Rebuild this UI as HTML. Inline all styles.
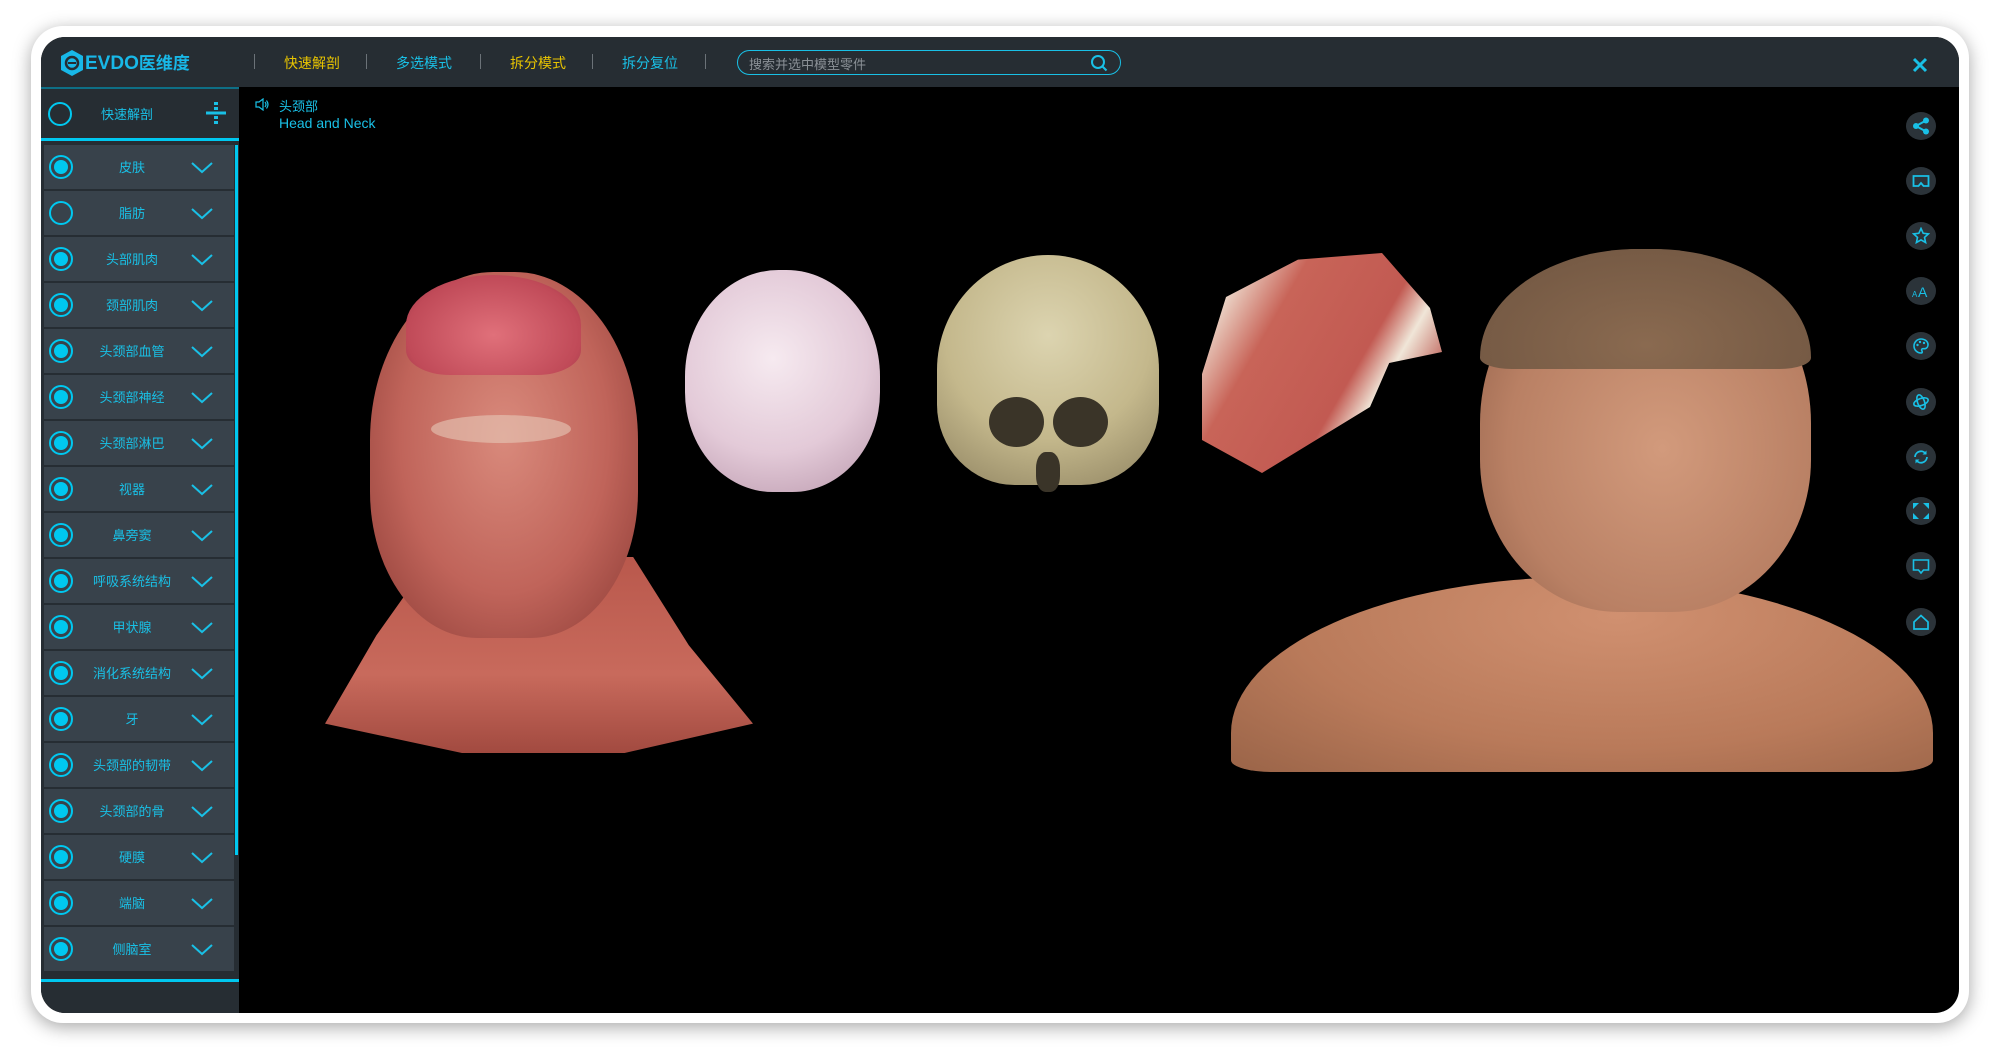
<!DOCTYPE html>
<html><head><meta charset="utf-8"><style>
*{margin:0;padding:0;box-sizing:border-box}
body{width:2000px;height:1056px;background:#fff;position:relative;overflow:hidden;font-family:"Liberation Sans","Noto Sans CJK SC",sans-serif}
.card{position:absolute;left:31px;top:26px;width:1938px;height:997px;background:#fff;border-radius:32px;box-shadow:0 4px 18px rgba(0,0,0,.35)}
.app{position:absolute;left:41px;top:37px;width:1918px;height:976px;background:#000;border-radius:24px;overflow:hidden}
.hdr{position:absolute;left:0;top:0;width:100%;height:50px;background:#262d33}
.abs{position:absolute}
.nav{position:absolute;top:16px;font-size:14px;white-space:nowrap}
.sep{position:absolute;top:17px;width:1px;height:15px;background:#6b7278}
.side{position:absolute;left:0;top:50px;width:198px;height:926px;background:#262d33}
.row{position:absolute;left:3px;width:190px;height:44px;background:#38424b}
.row .c{position:absolute;left:5px;top:10px;width:24px;height:24px;border:2px solid #00c8f0;border-radius:50%}
.row .c i{position:absolute;left:3px;top:3px;width:14px;height:14px;border-radius:50%;background:#00c8f0}
.row .t{position:absolute;left:36px;width:104px;top:12px;text-align:center;color:#19c0e6;font-size:13px}
.row svg{position:absolute;left:147px;top:16px}
.ic{position:absolute;left:1865px;width:30px;height:28px;border-radius:50%;background:#2b3339}
.ic svg{position:absolute;left:6px;top:5px}
</style></head><body>
<div class="card"></div>
<div class="app">
<div class="hdr">
 <svg class="abs" style="left:18px;top:12px" width="26" height="28" viewBox="0 0 26 28"><path d="M13 1 L24 7 L24 21 L13 27 L2 21 L2 7Z" fill="#18b8e8"/><circle cx="13" cy="14" r="6" fill="none" stroke="#262d33" stroke-width="2.5"/><path d="M9 14h8" stroke="#262d33" stroke-width="2"/></svg>
 <div class="abs" style="left:44px;top:12px;color:#18b8e8;font-weight:bold;font-size:19px">EVDO<span style="font-size:17px">医维度</span></div>
 <div class="sep" style="left:213px"></div><div class="sep" style="left:325px"></div><div class="sep" style="left:439px"></div><div class="sep" style="left:551px"></div><div class="sep" style="left:664px"></div>
 <div class="nav" style="left:243px;color:#e8c400">快速解剖</div>
 <div class="nav" style="left:355px;color:#19c0e6">多选模式</div>
 <div class="nav" style="left:469px;color:#e8c400">拆分模式</div>
 <div class="nav" style="left:581px;color:#19c0e6">拆分复位</div>
 <div class="abs" style="left:696px;top:13px;width:384px;height:25px;border:1.5px solid #19c0e6;border-radius:13px"></div>
 <div class="abs" style="left:708px;top:17px;color:#8a9096;font-size:13px">搜索并选中模型零件</div>
 <svg class="abs" style="left:1049px;top:17px" width="18" height="18" viewBox="0 0 18 18"><circle cx="8" cy="8" r="6" fill="none" stroke="#19c0e6" stroke-width="2"/><path d="M12.5 12.5L16.5 16.5" stroke="#19c0e6" stroke-width="2"/></svg>
 <svg class="abs" style="left:1871px;top:20px" width="16" height="16" viewBox="0 0 16 16"><path d="M2 2L14 14M14 2L2 14" stroke="#19c0e6" stroke-width="3"/></svg>
</div>
<div class="side">
 <div class="abs" style="left:0;top:0;width:198px;height:2px;background:#0e6f86"></div>
 <div class="abs" style="left:7px;top:15px;width:24px;height:24px;border:2px solid #00c8f0;border-radius:50%"></div>
 <div class="abs" style="left:60px;top:17px;color:#19c0e6;font-size:13px">快速解剖</div>
 <svg class="abs" style="left:165px;top:15px" width="20" height="22" viewBox="0 0 20 22"><g fill="#19c0e6"><rect x="8" y="0" width="4" height="3"/><rect x="8" y="5" width="4" height="3"/><rect x="0" y="9.5" width="20" height="3"/><rect x="8" y="14" width="4" height="3"/><rect x="8" y="19" width="4" height="3"/></g></svg>
 <div class="abs" style="left:0;top:51px;width:198px;height:3px;background:#00c8f0"></div>
 <div class="abs" style="left:194px;top:58px;width:3px;height:710px;background:#00c8f0"></div>
 <div class="abs" style="left:0;top:892px;width:198px;height:3px;background:#00c8f0"></div>
 <div id="rows"></div>
</div>
<svg class="abs" style="left:214px;top:61px" width="14" height="13" viewBox="0 0 14 13"><path d="M1 4h3l4-3v11l-4-3H1z" fill="none" stroke="#19c0e6" stroke-width="1.2"/><path d="M10 4q2 2.5 0 5M11.5 2.5q3 4 0 8" fill="none" stroke="#19c0e6" stroke-width="1.2"/></svg>
<div class="abs" style="left:238px;top:59px;color:#19c0e6;font-size:13px">头颈部</div>
<div class="abs" style="left:238px;top:78px;color:#19c0e6;font-size:14px">Head and Neck</div>

<!-- models -->
<div class="abs" style="left:284px;top:520px;width:428px;height:196px;clip-path:polygon(25% 0,72% 0,85% 45%,100% 85%,70% 100%,32% 100%,0 85%,12% 40%);background:linear-gradient(#b9584c,#c86a5c 60%,#a24a40)"></div>
<div class="abs" style="left:329px;top:235px;width:268px;height:366px;border-radius:46% 46% 40% 40%;background:radial-gradient(ellipse at 50% 45%,#d98a7c,#c0645a 55%,#8a3a34)"></div>
<div class="abs" style="left:365px;top:238px;width:175px;height:100px;border-radius:50% 50% 25% 25%;background:radial-gradient(ellipse at 50% 60%,#e0707a,#c04a58 70%,#8a3040)"></div>
<div class="abs" style="left:390px;top:378px;width:140px;height:28px;border-radius:50%;background:#e6c8b8;opacity:.6"></div>
<div class="abs" style="left:644px;top:233px;width:195px;height:222px;border-radius:48% 48% 45% 45%;background:radial-gradient(circle at 45% 40%,#f6eaf0,#e3cad8 55%,#b896aa)"></div>
<div class="abs" style="left:896px;top:218px;width:222px;height:230px;border-radius:50% 50% 35% 35%;clip-path:polygon(0 0,100% 0,100% 80%,80% 100%,20% 100%,0 80%);background:radial-gradient(circle at 50% 35%,#dcd4b0,#c4b88c 55%,#8e8260)"></div>
<div class="abs" style="left:948px;top:360px;width:55px;height:50px;border-radius:50%;background:#3a3428"></div>
<div class="abs" style="left:1012px;top:360px;width:55px;height:50px;border-radius:50%;background:#3a3428"></div>
<div class="abs" style="left:995px;top:415px;width:24px;height:40px;border-radius:40%;background:#3a3428"></div>
<div class="abs" style="left:1161px;top:216px;width:240px;height:220px;clip-path:polygon(0 55%,10% 20%,40% 3%,75% 0,95% 25%,100% 45%,78% 50%,70% 70%,25% 100%,0 85%);background:linear-gradient(120deg,#f2eadc 10%,#c86458 30%,#c25a52 60%,#f0e6d8 70%,#b9544c 85%)"></div>
<div class="abs" style="left:1190px;top:540px;width:702px;height:195px;border-radius:50% 50% 6% 6%/80% 80% 6% 6%;background:radial-gradient(ellipse at 55% 20%,#d09070,#b97a5a 60%,#9a6448)"></div>
<div class="abs" style="left:1439px;top:212px;width:331px;height:363px;border-radius:48% 48% 42% 42%;background:radial-gradient(ellipse at 55% 55%,#d29a7c,#b98064 60%,#8a5a44)"></div>
<div class="abs" style="left:1439px;top:212px;width:331px;height:120px;border-radius:50% 50% 10% 10%/95% 95% 10% 10%;background:radial-gradient(ellipse at 50% 80%,#8a6a50,#6e5440)"></div>

<div class="ic" style="top:75px"><svg width="18" height="18" viewBox="0 0 18 18"><g fill="#19c0e6"><circle cx="14" cy="3.5" r="3"/><circle cx="4" cy="9" r="3"/><circle cx="14" cy="14.5" r="3"/></g><path d="M14 3.5L4 9L14 14.5" stroke="#19c0e6" stroke-width="2" fill="none"/></svg></div>
<div class="ic" style="top:130px"><svg width="18" height="18" viewBox="0 0 18 18"><path d="M1.5 4h15v10h-5l-2.5-3-2.5 3h-5z" fill="none" stroke="#19c0e6" stroke-width="1.8"/></svg></div>
<div class="ic" style="top:185px"><svg width="18" height="18" viewBox="0 0 18 18"><path d="M9 1.5l2.2 4.8 5.2.6-3.9 3.5 1.1 5.1L9 12.9l-4.6 2.6 1.1-5.1L1.6 6.9l5.2-.6z" fill="none" stroke="#19c0e6" stroke-width="1.6"/></svg></div>
<div class="ic" style="top:240px"><svg width="18" height="18" viewBox="0 0 18 18"><text x="0" y="15" font-size="8" fill="#19c0e6" font-family="Liberation Sans">A</text><text x="6" y="15" font-size="14" fill="#19c0e6" font-family="Liberation Sans">A</text></svg></div>
<div class="ic" style="top:295px"><svg width="18" height="18" viewBox="0 0 18 18"><path d="M9 2a7 7 0 1 0 0 14c1.5 0 1.5-1.5.8-2.3-.7-.9 0-2 1.2-2H13a4 4 0 0 0 3-4C16 4.5 13 2 9 2z" fill="none" stroke="#19c0e6" stroke-width="1.6"/><g fill="#19c0e6"><circle cx="5.5" cy="8" r="1.2"/><circle cx="8" cy="5" r="1.2"/><circle cx="12" cy="6" r="1.2"/></g></svg></div>
<div class="ic" style="top:351px"><svg width="18" height="18" viewBox="0 0 18 18"><ellipse cx="9" cy="9" rx="7.5" ry="3.5" fill="none" stroke="#19c0e6" stroke-width="1.6" transform="rotate(-20 9 9)"/><ellipse cx="9" cy="9" rx="3.5" ry="7.5" fill="none" stroke="#19c0e6" stroke-width="1.6" transform="rotate(-20 9 9)"/></svg></div>
<div class="ic" style="top:406px"><svg width="18" height="18" viewBox="0 0 18 18"><path d="M3 9a6 6 0 0 1 11-3M15 9a6 6 0 0 1-11 3" fill="none" stroke="#19c0e6" stroke-width="1.8"/><path d="M14.5 2.5v4h-4zM3.5 15.5v-4h4z" fill="#19c0e6"/></svg></div>
<div class="ic" style="top:460px"><svg width="18" height="18" viewBox="0 0 18 18"><g fill="#19c0e6"><path d="M1 1h6L1 7zM17 1v6l-6-6zM1 17v-6l6 6zM17 17h-6l6-6z"/></g></svg></div>
<div class="ic" style="top:515px"><svg width="18" height="18" viewBox="0 0 18 18"><path d="M1.5 3h15v10h-5l-2.5 3-2.5-3h-5z" fill="none" stroke="#19c0e6" stroke-width="1.6"/></svg></div>
<div class="ic" style="top:571px"><svg width="18" height="18" viewBox="0 0 18 18"><path d="M2 9L9 2.5 16 9v7H2z" fill="none" stroke="#19c0e6" stroke-width="1.7"/></svg></div>
</div>
<script>
var n=["皮肤","脂肪","头部肌肉","颈部肌肉","头颈部血管","头颈部神经","头颈部淋巴","视器","鼻旁窦","呼吸系统结构","甲状腺","消化系统结构","牙","头颈部的韧带","头颈部的骨","硬膜","端脑","侧脑室"];
var h="";n.forEach(function(t,i){var f=i==1?"":"<i></i>";h+='<div class="row" style="top:'+(58+i*46)+'px"><div class="c">'+f+'</div><div class="t">'+t+'</div><svg width="22" height="14" viewBox="0 0 22 14"><path d="M1 2l10 9 10-9" fill="none" stroke="#19c0e6" stroke-width="2"/></svg></div>'});
document.getElementById("rows").innerHTML=h;
</script>
</body></html>
